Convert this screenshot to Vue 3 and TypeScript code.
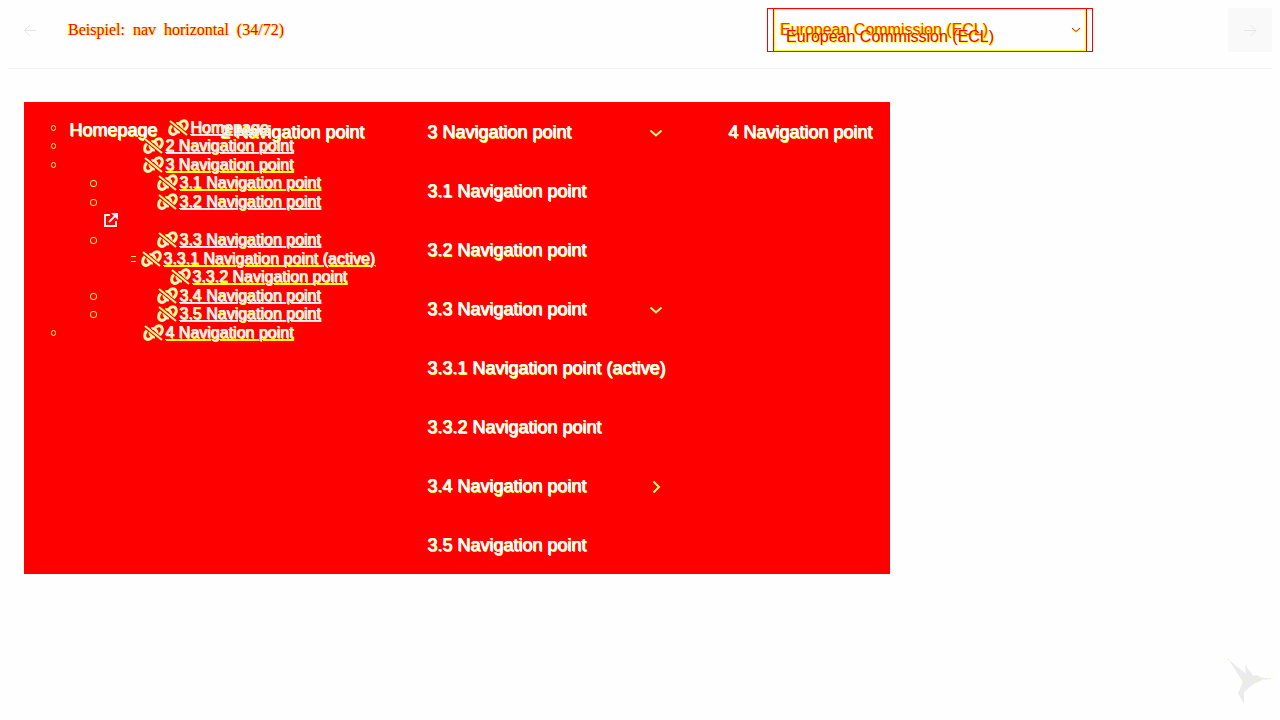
<script setup lang="ts">
interface OutlineItem {
  label: string
  level: string
  marker: string
  external?: boolean
}

const menu = [
  { label: '3 Navigation point', icon: 'down' },
  { label: '3.1 Navigation point', icon: '' },
  { label: '3.2 Navigation point', icon: '' },
  { label: '3.3 Navigation point', icon: 'down' },
  { label: '3.3.1 Navigation point (active)', icon: '' },
  { label: '3.3.2 Navigation point', icon: '' },
  { label: '3.4 Navigation point', icon: 'right' },
  { label: '3.5 Navigation point', icon: '' },
]

const outline: OutlineItem[] = [
  { label: 'Homepage', level: 'first', marker: 'ring' },
  { label: '2 Navigation point', level: 'one', marker: 'ring' },
  { label: '3 Navigation point', level: 'one', marker: 'ring' },
  { label: '3.1 Navigation point', level: 'two', marker: 'ring' },
  { label: '3.2 Navigation point', level: 'two', marker: 'ring', external: true },
  { label: '3.3 Navigation point', level: 'two', marker: 'ring' },
  { label: '3.3.1 Navigation point (active)', level: 'three', marker: 'bars' },
  { label: '3.3.2 Navigation point', level: 'four', marker: 'none' },
  { label: '3.4 Navigation point', level: 'two', marker: 'ring' },
  { label: '3.5 Navigation point', level: 'two', marker: 'ring' },
  { label: '4 Navigation point', level: 'one', marker: 'ring' },
]

const slashPath = 'M2 2l17 14'
const linkPath =
  'M12 4C14 1 18 1 19 4C20 7 18 10 15 12M4 6.5C1 9 1 14 3.5 15C6 16 8 14.500 9 13M8.500 4.500C12 4 15 7 13.500 10M7 8C6.500 11 9 13 12 13'
</script>

<template>
  <div class="page">
    <header class="bar">
      <button class="step" type="button" aria-label="Previous">
        <svg width="44" height="44" viewBox="0 0 44 44"><path d="M28 22.5H16.5M22 17l-5.5 5.5L22 28" /></svg>
      </button>
      <h1 class="title">Beispiel:&nbsp; nav&nbsp; horizontal&nbsp; (34/72)</h1>
      <div class="theme">
        <select class="select" aria-label="Theme">
          <option>European Commission (ECL)</option>
        </select>
        <span class="ghost" aria-hidden="true">European Commission (ECL)</span>
        <svg class="caret" width="10" height="7" viewBox="0 0 10 7"><path class="under" d="M1 2l4 3.5L9 2" /><path d="M1 1l4 3.5L9 1" /></svg>
      </div>
      <button class="step next" type="button" aria-label="Next">
        <svg width="44" height="44" viewBox="0 0 44 44"><path d="M16 22.5h12M22.5 17l5.5 5.5-5.5 5.5" /></svg>
      </button>
    </header>

    <main class="stage">
      <nav class="nav" aria-label="Main">
        <a class="item home" href="#">Homepage</a>
        <a class="item" href="#">2 Navigation point</a>
        <ul class="menu">
          <li v-for="m in menu" :key="m.label">
            <a class="item" href="#">{{ m.label }}</a>
            <svg v-if="m.icon" class="chevron" width="14" height="16" viewBox="0 0 14 16">
              <path v-if="m.icon === 'down'" d="M1.5 6.500L7 11.500l5.500-5" />
              <path v-else d="M4.5 3.500L10 9l-5.500 5.500" />
            </svg>
          </li>
        </ul>
        <a class="item" href="#">4 Navigation point</a>
      </nav>

      <ul class="outline">
        <li v-for="o in outline" :key="o.label" :class="o.level">
          <div class="row">
            <i :class="['marker', o.marker]"></i>
            <a href="#">
              <svg class="link" width="22" height="18" viewBox="0 0 22 18">
                <path class="edge" :d="linkPath" />
                <path class="core" :d="linkPath" />
                <path class="slash-edge" :d="slashPath" />
                <path class="slash" :d="slashPath" />
              </svg><span>{{ o.label }}</span>
            </a>
          </div>
          <svg v-if="o.external" class="external" width="14" height="14" viewBox="0 0 14 14">
            <path d="M6 2H1v11h11V8M5 9l7-7" /><path class="solid" d="M7 0h7v7z" />
          </svg>
        </li>
      </ul>
    </main>

    <svg class="bird" width="46" height="46" viewBox="0 0 46 46" aria-hidden="true">
      <path d="M2 1L29 23l-2 1-11-1zM18 6l7 9 3 8-9-8zM25 17l5-1 7 4-8 4zM31 18l14 2-13 1zM16 23h13L17 33v12l-6-11z" />
      <path class="dots" d="M1 0h1v1H1zM15 22h1v1h-1zM27 23h1v1h-1zM31 20h1v1h-1zM43 19h1v1h-1z" />
    </svg>
  </div>
</template>

<style>
body { background: #fefefe; }
</style>

<style scoped>
.page { padding: 8px; font-family: "Liberation Sans", Arial, sans-serif; }
.bar { display: grid; grid-template-columns: 44px minmax(0, 1fr) 326px 135px 44px; align-items: center; padding-bottom: 16px; border-bottom: 1px solid #f1f1f1; }
.step { display: block; width: 44px; height: 44px; padding: 0; border: 0; background: transparent; }
.step svg { display: block; fill: none; stroke: #e6e6e6; stroke-width: 1; }
.next { grid-column: 5; background: #f9f9f9; }
.title { margin: 0; padding-left: 16px; font: 16px/20px "Liberation Serif", "Times New Roman", serif; color: #ff0000; text-shadow: -1px 0 #ffff00, 1px 0 #e6e6e6, 1px 1px #ffff66; white-space: nowrap; }
.theme { position: relative; height: 44px; box-sizing: border-box; padding: 0 5px; border: 1px solid #ff0000; }
.select { appearance: none; display: block; width: 100%; height: 44px; margin-top: -1px; padding: 0 6px; box-sizing: border-box; border: 1px solid #ff0000; border-radius: 0; box-shadow: inset 0 0 0 1px #ffff00; background: #fefefe; font: 16px/20px "Liberation Sans", Arial, sans-serif; color: #ff3300; text-shadow: -1px 0 #ffff00, 1px 1px #ffff00; }
.ghost { position: absolute; left: 18px; top: 18px; font-size: 16px; line-height: 20px; color: #ff0000; text-shadow: 1px 1px #ffff00; pointer-events: none; }
.caret { position: absolute; right: 11px; top: 18px; fill: none; stroke: #ff0000; pointer-events: none; }
.caret .under { stroke: #ffff00; }

.stage { position: relative; padding: 33px 16px; }
.nav { display: grid; grid-template-columns: 196px 207px 301px 162px; width: fit-content; background: #ff0000; }
.item { display: block; padding-top: 2px; font-size: 18px; line-height: 57px; color: #ffffff; text-decoration: none; white-space: nowrap; text-shadow: 1px 0 #ffffff, 1px 1px #ffff00; }
.home { padding: 0 0 0 45px; }
.menu { margin: 0; padding: 0; list-style: none; }
.menu li { display: flex; align-items: center; justify-content: space-between; padding-right: 65px; }
.menu li:nth-child(5) { padding-right: 0; }
.chevron { fill: none; stroke: #ffff66; stroke-width: 2; }

.outline { position: absolute; left: 16px; top: 50px; margin: 0; padding: 0; list-style: none; color: #eeeeee; }
.row { display: flex; align-items: center; height: 18px; }
.outline li:nth-child(even) { padding-bottom: 1px; }
.row a { display: flex; align-items: center; color: inherit; font-size: 16px; line-height: 18px; white-space: nowrap; text-decoration: none; text-shadow: 1px 0 #eeeeee, 1px 1px #ffff00; }
.row span { text-decoration: underline; }
.marker { box-sizing: border-box; flex: none; width: 5px; height: 6px; margin-left: 27px; }
.ring { border: 1px solid #ffff55; border-radius: 3px; }
.bars { border-top: 1px solid #ffff00; border-bottom: 1px solid #ffff00; }
.first .row a { margin-left: 112px; }
.one .row a { margin-left: 87px; }
.two .marker { width: 7px; height: 7px; margin-left: 66px; }
.two .row a { margin-left: 60px; }
.three .marker { margin-left: 107px; }
.three .row a { margin-left: 5px; }
.four .row a { margin-left: 114px; }
.link { fill: none; }
.edge { stroke: #ffff00; stroke-width: 3; }
.core { stroke: #eeeeee; stroke-width: 2; }
.slash-edge { stroke: #ff0000; stroke-width: 4; }
.slash { stroke: #ffff88; stroke-width: 2; }
.external { display: block; margin: 0 0 4px 80px; padding-top: 2px; fill: none; stroke: #eeeeee; stroke-width: 2; }
.solid { fill: #eeeeee; stroke: none; }
.bird { position: fixed; right: 7px; bottom: 15px; fill: #ebebeb; }
.dots { fill: #ffff00; }
</style>
